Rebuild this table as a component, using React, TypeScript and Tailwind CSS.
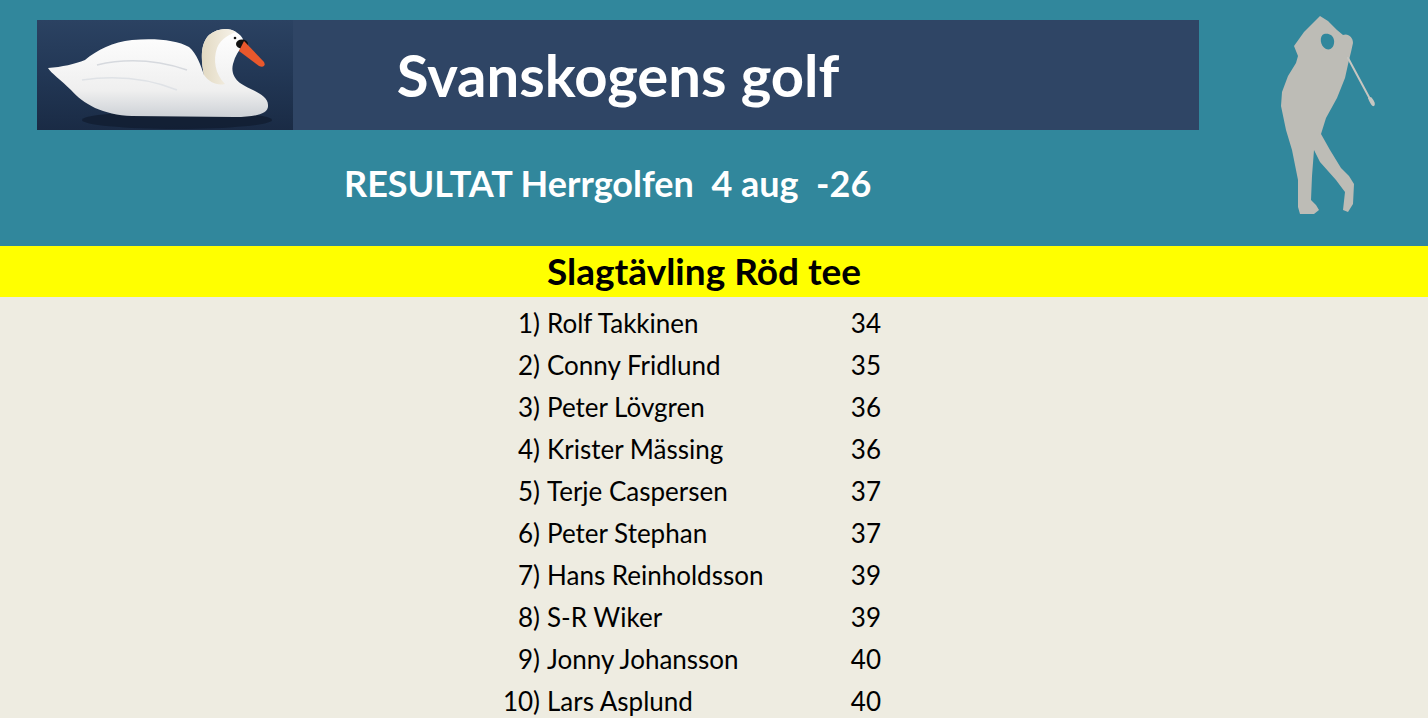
const results = [
  { pos: 1, name: "Rolf Takkinen", score: 34 },
  { pos: 2, name: "Conny Fridlund", score: 35 },
  { pos: 3, name: "Peter Lövgren", score: 36 },
  { pos: 4, name: "Krister Mässing", score: 36 },
  { pos: 5, name: "Terje Caspersen", score: 37 },
  { pos: 6, name: "Peter Stephan", score: 37 },
  { pos: 7, name: "Hans Reinholdsson", score: 39 },
  { pos: 8, name: "S-R Wiker", score: 39 },
  { pos: 9, name: "Jonny Johansson", score: 40 },
  { pos: 10, name: "Lars Asplund", score: 40 },
];

function Swan() {
  return (
    <svg viewBox="0 0 256 110" className="h-[110px] w-[256px] shrink-0">
      <defs>
        <linearGradient id="water" x1="0" y1="0" x2="0" y2="1">
          <stop offset="0" stopColor="#2b4262" />
          <stop offset="0.5" stopColor="#223755" />
          <stop offset="1" stopColor="#1a2b45" />
        </linearGradient>
        <linearGradient id="body" x1="0" y1="0" x2="0" y2="1">
          <stop offset="0" stopColor="#ffffff" />
          <stop offset="0.7" stopColor="#efefef" />
          <stop offset="1" stopColor="#cdd1d6" />
        </linearGradient>
        <linearGradient id="neck" x1="0" y1="0" x2="1" y2="0">
          <stop offset="0" stopColor="#e2d9c2" />
          <stop offset="1" stopColor="#f7f3ea" />
        </linearGradient>
      </defs>
      <rect width="256" height="110" fill="url(#water)" />
      <ellipse cx="140" cy="100" rx="95" ry="9" fill="#0f1b2d" opacity="0.7" />
      {/* body */}
      <path
        d="M11 48 C25 47 38 44 48 40 C60 30 76 22 95 20 C118 18 140 20 152 27 C160 34 164 46 167 55 C164 40 163 24 172 15 C180 8 192 7 199 12 C204 15 207 19 207 24 C202 30 198 36 196 44 C194 52 197 58 203 63 C213 70 231 74 231 85 C232 94 218 97 198 97 L95 96 C66 95 46 84 34 70 C24 60 14 53 11 48 Z"
        fill="url(#body)"
      />
      {/* neck shading */}
      <path
        d="M167 55 C164 40 163 24 172 15 C180 8 192 7 199 12 C194 14 184 18 180 28 C176 40 178 54 188 64 C180 66 172 62 167 55 Z"
        fill="url(#neck)"
      />
      {/* wing feathers */}
      <path d="M60 45 C90 38 120 40 150 50" stroke="#d6d9de" strokeWidth="1.5" fill="none" />
      <path d="M45 60 C80 55 110 58 140 70" stroke="#dfe2e6" strokeWidth="1.5" fill="none" />
      {/* black knob */}
      <ellipse cx="205" cy="24" rx="6" ry="4.5" fill="#111" />
      {/* beak */}
      <path d="M207 21 L227 42 C229 46 226 48 222 46 L202 31 Z" fill="#e8582c" />
      <circle cx="198" cy="18" r="1.3" fill="#111" />
    </svg>
  );
}

function Golfer() {
  return (
    <svg viewBox="0 0 188 240" className="h-[240px] w-[188px] shrink-0">
      <path
        fillRule="evenodd"
        fill="#bdbcb6"
        d="M80 16 L88 21 L97 30 L103 35 C108 33 113 37 113 43 L111 52 L109 60 L105 78 L97 98 L86 118 L81 134 L90 150 L101 168 L109 176 L114 184 L113 204 L108 212 L103 210 L105 192 L96 180 L80 162 L74 150 L72 176 L71 200 L76 205 L79 210 L74 214 L60 214 L58 207 L58 180 L52 150 L46 130 L41 106 L42 92 L48 76 L56 63 L58 56 L54 46 L64 32 Z M84 34 C79 36 80 46 86 49 C91 51 95 46 94 40 C93 35 89 33 84 34 Z"
      />
      <path d="M108 58 L130 99" stroke="#c7c6c1" strokeWidth="2" strokeLinecap="round" />
      <path d="M128 98 C130 103 132 107 134 106 C136 104 134 100 131 97 Z" fill="#c7c6c1" />
    </svg>
  );
}

export default function App() {
  return (
    <div className="min-h-screen w-full bg-[#eeece1] font-['Lato','Open_Sans',sans-serif]">
      {/* Header */}
      <header className="flex h-[246px] bg-[#31879c]">
        <div className="w-[1240px]">
          <div className="ml-[37px] mt-[20px] flex h-[110px] w-[1162px] items-center bg-[#2f4565]">
            <Swan />
            <div className="flex flex-1 justify-center pr-[256px]">
              <h1 className="text-[58px] font-bold leading-none text-white">Svanskogens golf</h1>
            </div>
          </div>
          <h2 className="mt-[35px] whitespace-pre pl-[344px] text-[36px] font-bold leading-none text-white">
            {"RESULTAT Herrgolfen  4 aug  -26"}
          </h2>
        </div>
        <Golfer />
      </header>

      {/* Section title */}
      <div className="h-[51px] bg-[#ffff00] pl-[547px] pt-[6px]">
        <h3 className="text-[37px] font-bold leading-none text-black">Slagtävling Röd tee</h3>
      </div>

      {/* Results */}
      <div className="pt-[5px]">
        {results.map((r) => (
          <div key={r.pos} className="flex h-[42px] items-center text-[26px] leading-[42px] text-black">
            <span className="w-[540px] text-right">{r.pos})</span>
            <span className="ml-[7px] w-[294px]">{r.name}</span>
            <span className="w-[40px] text-right">{r.score}</span>
          </div>
        ))}
      </div>
    </div>
  );
}
